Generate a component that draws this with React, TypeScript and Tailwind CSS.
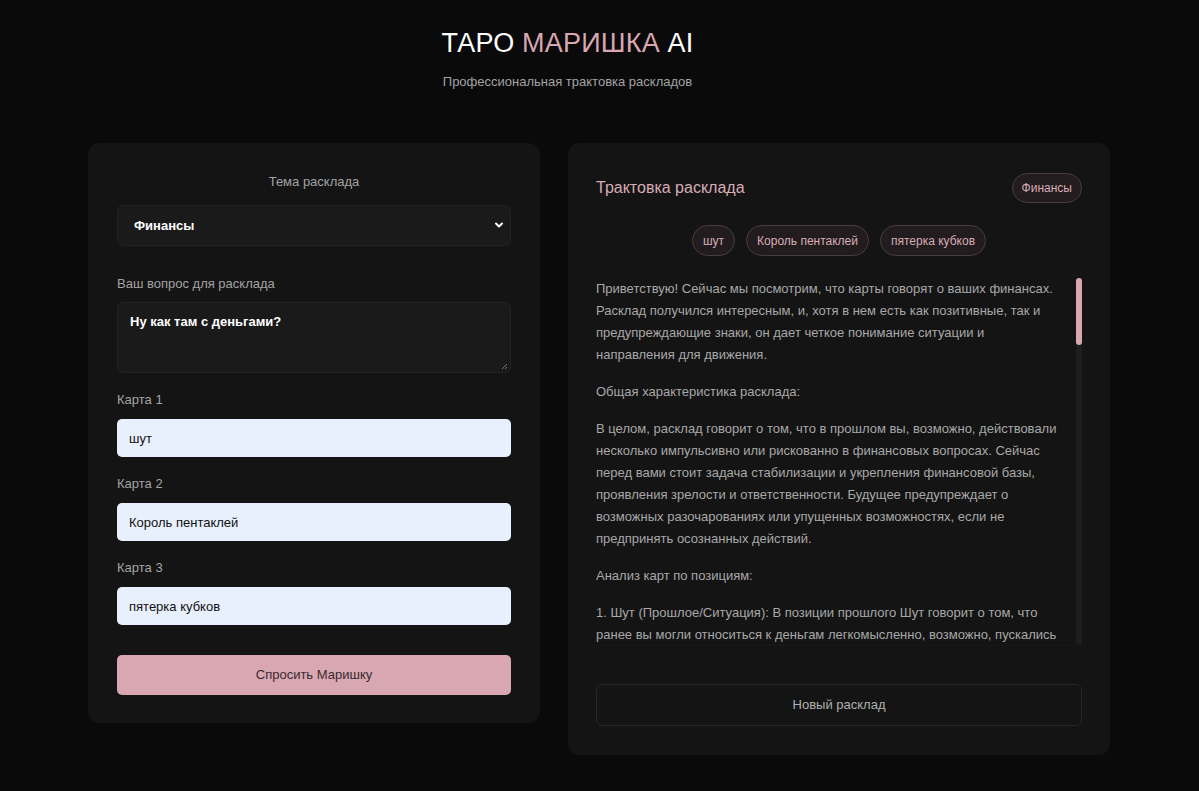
import React from 'react';
import { ChevronDown } from 'lucide-react';

const cards = ['шут', 'Король пентаклей', 'пятерка кубков'];

const paragraphs = [
    'Приветствую! Сейчас мы посмотрим, что карты говорят о ваших финансах. Расклад получился интересным, и, хотя в нем есть как позитивные, так и предупреждающие знаки, он дает четкое понимание ситуации и направления для движения.',
    'Общая характеристика расклада:',
    'В целом, расклад говорит о том, что в прошлом вы, возможно, действовали несколько импульсивно или рискованно в финансовых вопросах. Сейчас перед вами стоит задача стабилизации и укрепления финансовой базы, проявления зрелости и ответственности. Будущее предупреждает о возможных разочарованиях или упущенных возможностях, если не предпринять осознанных действий.',
    'Анализ карт по позициям:',
    '1. Шут (Прошлое/Ситуация): В позиции прошлого Шут говорит о том, что ранее вы могли относиться к деньгам легкомысленно, возможно, пускались',
];

const CardField = ({ label, value }: { label: string; value: string }) => (
    <div className="flex flex-col">
        <label className="text-[13px] leading-5 text-[#a3a3a3]">{label}</label>
        <input
            readOnly
            value={value}
            className="mt-[9px] h-[38px] w-full rounded-[5px] bg-[#e8f0fe] px-3 text-[13px] text-[#111] outline-none"
        />
    </div>
);

export default function App() {
    return (
        <div className="min-h-[791px] w-full bg-[#0a0a0a] font-['Liberation_Sans',Arial,sans-serif]">
            {/* Header */}
            <div className="flex flex-col items-center pr-[64px] pt-[27px]">
                <h1 className="text-[27px] leading-8 tracking-[0.2px] text-white">
                    ТАРО <span className="text-[#d8a7b1]">МАРИШКА</span> AI
                </h1>
                <p className="mt-[13px] text-[13px] leading-5 text-[#a3a3a3]">Профессиональная трактовка раскладов</p>
            </div>

            <div className="mt-[51px] flex items-start gap-[28px] pl-[88px]">
                {/* Left: form */}
                <div className="w-[452px] rounded-xl bg-[#141414] px-[29px] pb-[28px] pt-[29px]">
                    <div className="text-center text-[13px] leading-5 text-[#a3a3a3]">Тема расклада</div>
                    <div className="relative mt-[13px]">
                        <div className="flex h-[41px] items-center rounded-md border border-[#222] bg-[#1a1a1a] pl-4 text-[13px] font-semibold text-white">
                            Финансы
                        </div>
                        <ChevronDown className="absolute right-[6px] top-[14px] h-3 w-3 text-white" strokeWidth={4} />
                    </div>

                    <div className="mt-[28px] text-[13px] leading-5 text-[#a3a3a3]">Ваш вопрос для расклада</div>
                    <div className="relative mt-[8px] h-[71px] rounded-md border border-[#222] bg-[#1a1a1a] px-3 pt-[9px] text-[13px] font-semibold text-white">
                        Ну как там с деньгами?
                        <svg className="absolute bottom-[2px] right-[2px]" width="7" height="7" viewBox="0 0 7 7">
                            <path d="M6 1L1 6M6 4L4 6" stroke="#777" strokeWidth="1" />
                        </svg>
                    </div>

                    <div className="mt-[17px] flex flex-col gap-[17px]">
                        <CardField label="Карта 1" value="шут" />
                        <CardField label="Карта 2" value="Король пентаклей" />
                        <CardField label="Карта 3" value="пятерка кубков" />
                    </div>

                    <button className="mt-[30px] h-[40px] w-full rounded-[5px] bg-[#d8a7b1] text-[13px] text-[#3a2a2e]">
                        Спросить Маришку
                    </button>
                </div>

                {/* Right: result */}
                <div className="w-[542px] rounded-xl bg-[#141414] px-[28px] pb-[29px] pt-[30px]">
                    <div className="flex items-center justify-between">
                        <h2 className="text-[16px] text-[#d6adb5]">Трактовка расклада</h2>
                        <span className="flex h-[30px] items-center rounded-full border border-[#4a3c40] bg-[#221c1e] px-[9px] text-[12px] text-[#d6adb5]">
                            Финансы
                        </span>
                    </div>

                    <div className="mt-[22px] flex justify-center gap-[11px]">
                        {cards.map((c) => (
                            <span
                                key={c}
                                className="flex h-[31px] items-center rounded-full border border-[#4a3c40] bg-[#221c1e] px-[10px] text-[12px] text-[#d6adb5]"
                            >
                                {c}
                            </span>
                        ))}
                    </div>

                    <div className="relative mt-[22px] border-b border-[#181818]">
                        <div className="h-[367px] overflow-hidden pr-[16px] text-[13px] leading-[22px] text-[#a8a8a8]">
                            {paragraphs.map((p, i) => (
                                <p key={i} className="mb-[15px]">
                                    {p}
                                </p>
                            ))}
                        </div>
                        {/* scrollbar */}
                        <div className="absolute right-0 top-0 h-[367px] w-[6px] rounded-full bg-[#1e1e1e]">
                            <div className="h-[67px] w-full rounded-full bg-[#d8a7b1]" />
                        </div>
                    </div>

                    <button className="mt-[38px] h-[42px] w-full rounded-md border border-[#262626] bg-[#141414] text-[13px] text-[#b0b0b0]">
                        Новый расклад
                    </button>
                </div>
            </div>
        </div>
    );
}
